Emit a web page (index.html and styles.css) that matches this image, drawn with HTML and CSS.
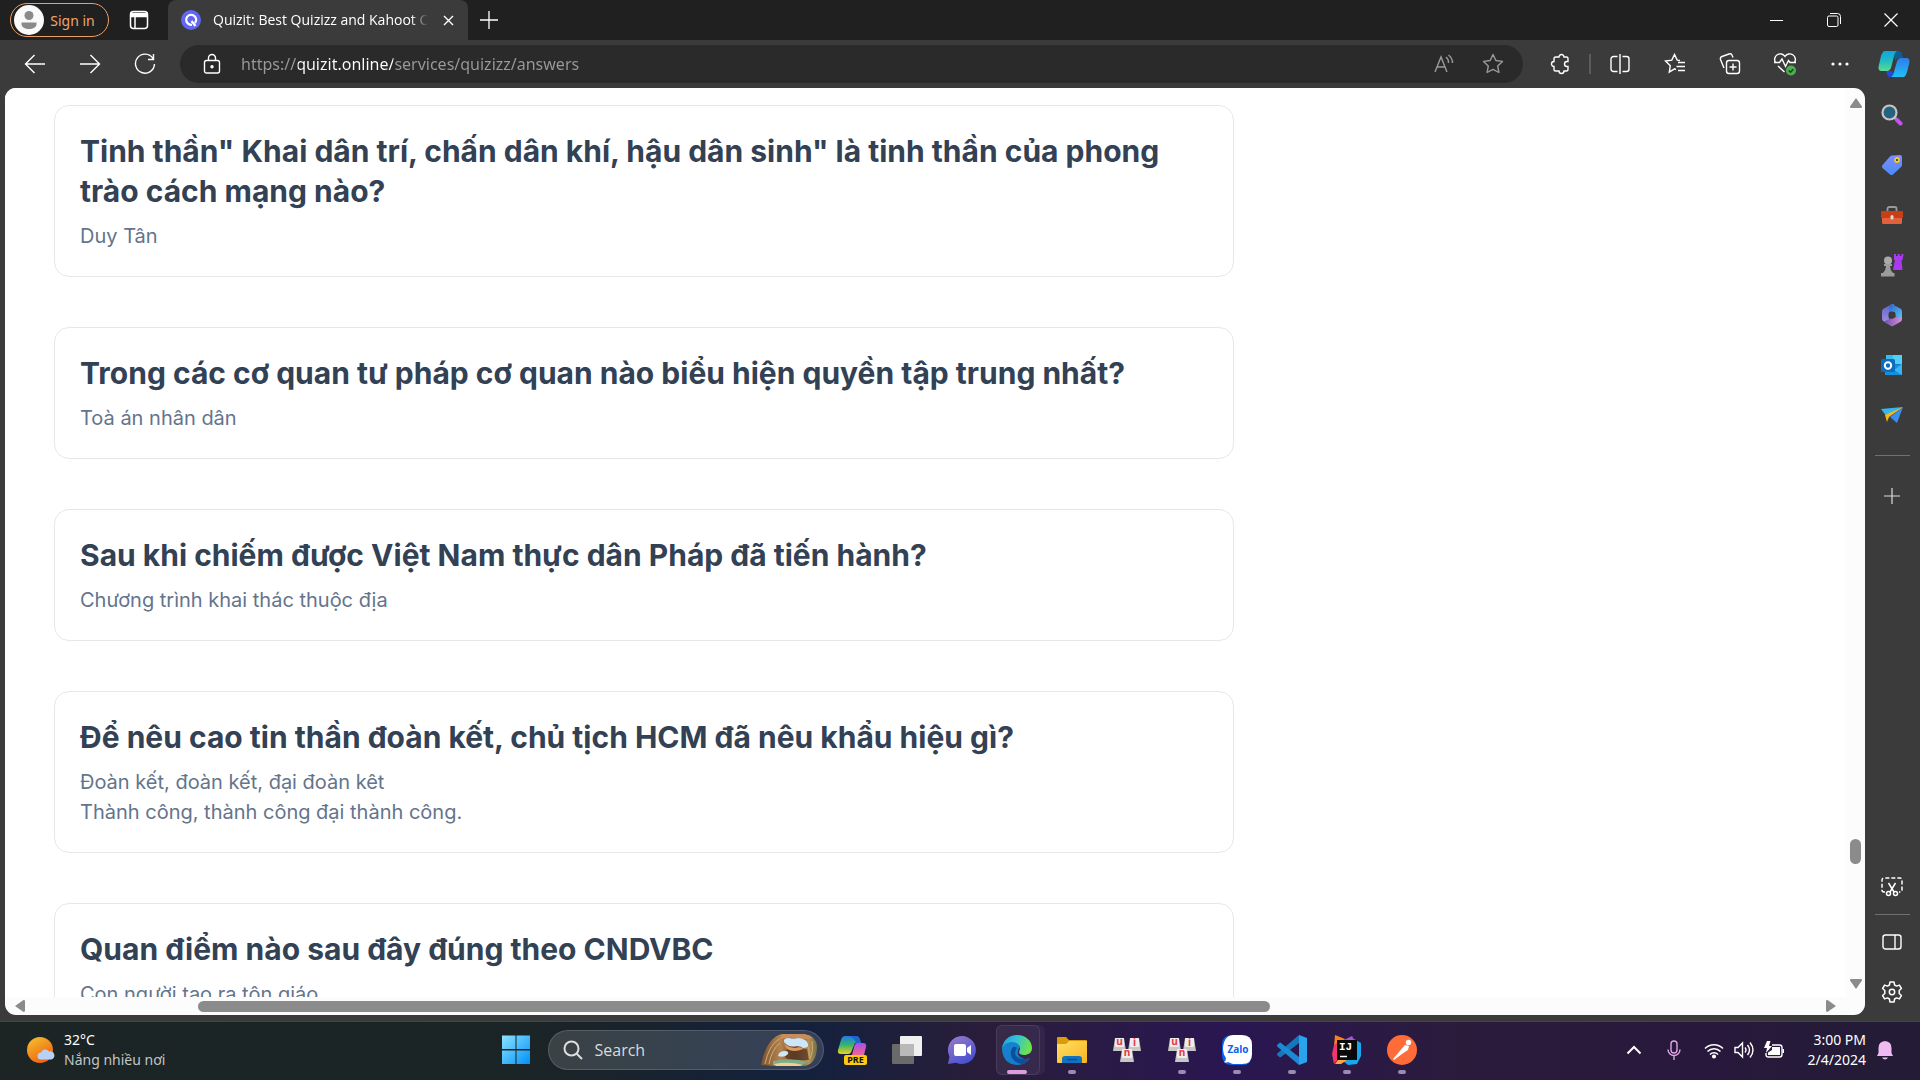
FILE: index.html
```html
<!DOCTYPE html>
<html lang="vi">
<head>
<meta charset="utf-8">
<meta name="viewport" content="width=device-width, initial-scale=1">
<title>Quizit: Best Quizizz and Kahoot</title>
<link rel="stylesheet" href="styles.css">
</head>
<body>
<div class="browser">
  <header class="tabstrip">
    <button class="profile" type="button">
      <svg width="30" height="30" viewBox="0 0 30 30" aria-hidden="true"><circle cx="15" cy="15" r="15" fill="#fafafa"/><circle cx="15" cy="10.500" r="4.500" fill="#8a8a8a"/><path d="M7.500 17.500h15v1.500c0 3.500-3.500 5-7.500 5s-7.500-1.500-7.500-5z" fill="#8a8a8a"/></svg>
      <span>Sign in</span>
    </button>
    <button class="workspace" type="button" aria-label="Tab actions">
      <svg width="20" height="20" viewBox="0 0 20 20" fill="none" stroke="#fff" stroke-width="1.500"><rect x="1.500" y="1.500" width="17" height="17" rx="3"/><path d="M2 3.500h16v3H2z" fill="#fff"/><path d="M6 7v11"/></svg>
    </button>
    <div class="tab">
      <svg width="20" height="20" viewBox="0 0 20 20" aria-hidden="true"><circle cx="10" cy="10" r="10" fill="#6366f1"/><path d="M11 14.700A5 5 0 1 1 14 13M10.500 11l4 5" fill="none" stroke="#fff" stroke-width="2.200"/></svg>
      <span class="tab-title">Quizit: Best Quizizz and Kahoot C</span>
      <button class="tab-close" type="button" aria-label="Close tab"><svg width="11" height="11" viewBox="0 0 11 11" stroke="#fff" stroke-width="1.400"><path d="M1 1l9 9M10 1l-9 9"/></svg></button>
    </div>
    <button class="new-tab" type="button" aria-label="New tab"><svg width="18" height="18" viewBox="0 0 18 18" stroke="#fff" stroke-width="1.300"><path d="M9 0v18M0 9h18"/></svg></button>
    <div class="window-controls">
      <button type="button" aria-label="Minimize"><svg width="13" height="13" viewBox="0 0 13 13" stroke="#fff"><path d="M0 6.500h13"/></svg></button>
      <button type="button" aria-label="Restore"><svg width="14" height="14" viewBox="0 0 14 14" fill="none" stroke="#fff"><rect x=".5" y="3" width="10.500" height="10.500" rx="1.500"/><path d="M3 .5h7.500a3 3 0 0 1 3 3V11"/></svg></button>
      <button type="button" aria-label="Close"><svg width="14" height="14" viewBox="0 0 14 14" stroke="#fff" stroke-width="1.200"><path d="M.5.5l13 13M13.500.5l-13 13"/></svg></button>
    </div>
  </header>

  <nav class="toolbar" aria-label="Browser toolbar">
    <div class="nav-buttons">
      <button type="button" aria-label="Back"><svg width="22" height="20" viewBox="0 0 22 20"><path d="M21 10H1.500M10.500 1L1.500 10l9 9"/></svg></button>
      <button type="button" aria-label="Forward"><svg width="22" height="20" viewBox="0 0 22 20"><path d="M1 10h19.500M11.500 1l9 9-9 9"/></svg></button>
      <button type="button" aria-label="Refresh"><svg width="22" height="22" viewBox="0 0 22 22"><path d="M19 5.500A9.500 9.500 0 1 0 20.500 11M19.500 1v5.500H14"/></svg></button>
    </div>
    <form class="address">
      <svg width="18" height="22" viewBox="0 0 18 22" fill="none" stroke="#fff" stroke-width="1.400" aria-hidden="true"><rect x="1.500" y="7.500" width="15" height="12.500" rx="2"/><path d="M5.500 7.500V5a3.500 3.500 0 0 1 7 0v2.500"/><circle cx="9" cy="13.700" r="1" fill="#fff"/></svg>
      <input type="text" aria-label="Address" value="https://quizit.online/services/quizizz/answers">
      <button type="button" aria-label="Read aloud"><svg width="20" height="20" viewBox="0 0 20 20"><path d="M1 18L7 3l6 15M3 13h8M12 3a7 7 0 0 1 2.500 6M14.500 1A10 10 0 0 1 18.500 9"/></svg></button>
      <button type="button" aria-label="Add to favorites"><svg width="22" height="22" viewBox="0 0 22 22" stroke-linejoin="round"><path d="M11 1.500l2.900 6 6.600.9-4.800 4.600 1.200 6.500-5.900-3.100-5.900 3.100 1.200-6.500L1.500 8.400l6.600-.9z"/></svg></button>
    </form>
    <div class="tools">
      <button type="button" aria-label="Extensions"><svg width="22" height="22" viewBox="0 0 22 22"><path d="M4 5.500a1.500 1.500 0 0 1 1.500-1.500H9a2.500 2.500 0 1 1 5 0h2.500A1.500 1.500 0 0 1 18 5.500V8.500h-1a2.500 2.500 0 0 0 0 5h1v3a1.500 1.500 0 0 1-1.500 1.500H14a2.500 2.500 0 0 1-5 0H5.500A1.500 1.500 0 0 1 4 16.500v-3a2.500 2.500 0 1 1 0-5z"/></svg></button>
      <span class="divider"></span>
      <button type="button" aria-label="Split screen"><svg width="20" height="20" viewBox="0 0 20 20"><path d="M7.500 2.500h-4a2.500 2.500 0 0 0-2.500 2.500v10a2.500 2.500 0 0 0 2.500 2.500h4M12.500 2.500h4A2.500 2.500 0 0 1 19 5v10a2.500 2.500 0 0 1-2.500 2.500h-4M10 0v20"/></svg></button>
      <button type="button" aria-label="Favorites"><svg width="22" height="22" viewBox="0 0 22 22"><path d="M12 16.500l-1.500-.7L5.300 19l1-6.300L1.500 8l6.300-.9L10.500 1.500l2.700 5.600 2.800.4M14 9.500h7M12.500 13.500H21M14 17.500h7"/></svg></button>
      <button type="button" aria-label="Collections"><svg width="22" height="22" viewBox="0 0 22 22"><rect x="7.500" y="7.500" width="13" height="13" rx="2.500"/><path d="M14 10.500v7M10.500 14h7M5 15L1.500 6.500a2.500 2.500 0 0 1 1.500-3l7-2.500a2.500 2.500 0 0 1 3.200 1.500l.8 2"/></svg></button>
      <button type="button" aria-label="Browser essentials"><svg width="24" height="24" viewBox="0 0 24 24"><path d="M2.500 10.500a5.300 5.300 0 0 1 9.500-6 5.300 5.300 0 0 1 9.500 6M1 10.500h5.500l2.500-3.500 3.500 7.500 3-6 1.500 2h6M5 14l6.500 6"/><circle cx="18" cy="18.500" r="5" fill="#4caf50" stroke="none"/><path d="M15.800 18.500l1.700 1.700 2.800-3" stroke="#1e3b1f"/></svg></button>
      <button type="button" aria-label="Settings and more"><svg width="18" height="6" viewBox="0 0 18 6"><g fill="#fff" stroke="none"><circle cx="2" cy="3" r="1.600"/><circle cx="9" cy="3" r="1.600"/><circle cx="16" cy="3" r="1.600"/></g></svg></button>
    </div>
    <button class="copilot" type="button" aria-label="Copilot">
      <svg width="32" height="28" viewBox="0 0 32 28"><defs><linearGradient id="c1" x2="0" y2="1"><stop offset="0" stop-color="#12a5de"/><stop offset=".5" stop-color="#22bcc4"/><stop offset="1" stop-color="#5ddc8c"/></linearGradient><linearGradient id="c2" x2="0" y2="1"><stop offset="0" stop-color="#2f7be8"/><stop offset="1" stop-color="#20c0f5"/></linearGradient></defs><path d="M14 1h6c2.500 0 3.500 1.500 4.200 4l.8 3h-4c-2 0-2.500.8-3.500 3z" fill="#0a6090"/><path d="M18 27h-6c-2.500 0-3-2-4-6h6z" fill="#2448d8"/><path d="M7 1h12c-2 1-2.500 3-3.500 7l-2 8c-1 4-2.500 5-5 5H4c-3 0-4-2-3.300-5L3 6c1-3 2-5 4-5z" fill="url(#c1)"/><path d="M25 27H13c2-1 2.500-3 3.500-7l2-7c1-4 2.500-5 5-5H28c3 0 4 2 3.300 5L29 22c-1 3-2 5-4 5z" fill="url(#c2)"/></svg>
    </button>
  </nav>

  <div class="workarea">
    <div class="page">
      <main class="viewport">
        <div class="answers">
          <article class="card">
            <h2>Tinh thần" Khai dân trí, chấn dân khí, hậu dân sinh" là tinh thần của phong trào cách mạng nào?</h2>
            <p>Duy Tân</p>
          </article>
          <article class="card">
            <h2>Trong các cơ quan tư pháp cơ quan nào biểu hiện quyền tập trung nhất?</h2>
            <p>Toà án nhân dân</p>
          </article>
          <article class="card">
            <h2>Sau khi chiếm được Việt Nam thực dân Pháp đã tiến hành?</h2>
            <p>Chương trình khai thác thuộc địa</p>
          </article>
          <article class="card">
            <h2>Để nêu cao tin thần đoàn kết, chủ tịch HCM đã nêu khẩu hiệu gì?</h2>
            <p>Đoàn kết, đoàn kết, đại đoàn kêt<br>Thành công, thành công đại thành công.</p>
          </article>
          <article class="card">
            <h2>Quan điểm nào sau đây đúng theo CNDVBC</h2>
            <p>Con người tạo ra tôn giáo</p>
          </article>
        </div>
      </main>
      <div class="scroll-y" aria-hidden="true">
        <svg width="12" height="10" viewBox="0 0 12 10"><path d="M6 0l6 8.500c0 1-.5 1.500-1.200 1.500H1.200C.5 10 0 9.500 0 8.500z"/></svg>
        <div class="track"><span class="thumb"></span></div>
        <svg width="12" height="10" viewBox="0 0 12 10"><path d="M6 10l6-8.500C12 .5 11.500 0 10.800 0H1.200C.5 0 0 .5 0 1.500z"/></svg>
      </div>
      <div class="scroll-x" aria-hidden="true">
        <svg width="10" height="12" viewBox="0 0 10 12"><path d="M0 6l8.500-6C9.500 0 10 .5 10 1.200v9.600c0 .7-.5 1.200-1.500 1.200z"/></svg>
        <div class="track"><span class="thumb"></span></div>
        <svg width="10" height="12" viewBox="0 0 10 12"><path d="M10 6L1.500 0C.5 0 0 .5 0 1.200v9.600c0 .7.5 1.200 1.500 1.200z"/></svg>
      </div>
    </div>

    <aside class="sidebar" aria-label="Edge sidebar">
      <button type="button" aria-label="Search"><svg width="22" height="22" viewBox="0 0 22 22"><path d="M13 13l3 3" stroke="#aaa" stroke-width="3"/><path d="M16 16l3.500 3.500" stroke="#c84df2" stroke-width="4" stroke-linecap="round"/><circle cx="8.500" cy="8.500" r="7" fill="#24627f" stroke="#c4c4c4" stroke-width="2.200"/></svg></button>
      <button type="button" aria-label="Shopping"><svg width="22" height="22" viewBox="0 0 22 22"><defs><linearGradient id="tg" x2="0" y2="1"><stop stop-color="#7d8cff"/><stop offset="1" stop-color="#4b8bf5"/></linearGradient></defs><path d="M11 1.500L19 1q2 0 2 2v8q0 1-1 2l-8 7.500q-1.500 1-3 0L1.500 14q-1.500-1.500 0-3L9 2.500q1-1 2-1z" fill="url(#tg)"/><circle cx="16" cy="6" r="2" fill="#26337a" stroke="#f2cd1c" stroke-width="1.800"/></svg></button>
      <button type="button" aria-label="Tools"><svg width="24" height="20" viewBox="0 0 24 20"><path d="M7.500 6V3.500q0-1.500 2-1.500h5q2 0 2 1.500V6" fill="none" stroke="#9a9a9a" stroke-width="1.800"/><rect x="2" y="9" width="20" height="10" rx="1.500" fill="#e2603a"/><rect x="1" y="6" width="22" height="7" rx="1" fill="#c93e14"/><rect x="10.500" y="10" width="3" height="4.500" rx="1.500" fill="#ddd"/></svg></button>
      <button type="button" aria-label="Games"><svg width="24" height="24" viewBox="0 0 24 24"><path d="M14 1h2v2h1.700V1h2v2h1.700V1H23.500l-1 6h-1l1 10H13l2-10h-1z" fill="#a93af0"/><circle cx="8" cy="7.500" r="4" fill="#aaa"/><path d="M4 11h8v2h-2q0 4 3 7h1.500v3.500H1V20h2q3-3 3-7H4z" fill="#9c9c9c"/></svg></button>
      <button type="button" aria-label="Microsoft 365"><svg width="22" height="24" viewBox="0 0 22 24"><defs><linearGradient id="m1" x2="0" y2="1"><stop stop-color="#5a66c9"/><stop offset="1" stop-color="#ab8fe6"/></linearGradient><linearGradient id="m2" x2="1" y2="1"><stop stop-color="#2f62cf"/><stop offset="1" stop-color="#57c7f2"/></linearGradient><linearGradient id="m3" x2="1"><stop stop-color="#6c4fb0"/><stop offset="1" stop-color="#d68fd8"/></linearGradient></defs><path d="M11 1L2 6Q1 7 1 9v6q0 2 1 3l6 3.500V9l5-4V1z" fill="url(#m1)"/><path d="M11 1l9 5q1 1 1 3v7l-7-3V9L8 8.500V3z" fill="url(#m2)"/><path d="M3 18.500l11-5 7 1v1q0 2-1 3l-8 4.500q-1 .5-2 0z" fill="url(#m3)"/><path d="M11 8.500l3.500 1.700v4L11 16l-3.500-1.800v-4z" fill="#3b3b3b"/></svg></button>
      <button type="button" aria-label="Outlook"><svg width="22" height="22" viewBox="0 0 22 22"><path d="M5 1h16v8H5z" fill="#39b9ee"/><path d="M12 1h9v9h-9z" fill="#4fd0fa"/><path d="M4 11l17-1v11H4z" fill="#1490df"/><path d="M21 10v11l-8-5z" fill="#35b8f1"/><rect y="5" width="14" height="13" rx="1.500" fill="#0a6dc2"/><circle cx="7" cy="11.500" r="3.200" fill="none" stroke="#fff" stroke-width="2"/></svg></button>
      <button type="button" aria-label="Drop"><svg width="22" height="18" viewBox="0 0 22 18"><path d="M0 3L22 1 6 11z" fill="#36b6ed"/><path d="M22 1L9 11l7 6z" fill="#3b8df0"/><path d="M22 1L4 9l2 7 2-5z" fill="#f5b817"/></svg></button>
      <hr>
      <button type="button" aria-label="Customize"><svg width="16" height="16" viewBox="0 0 16 16" stroke="#ddd" stroke-width="1.200"><path d="M8 0v16M0 8h16"/></svg></button>
      <div class="sidebar-end">
        <button type="button" aria-label="Screenshot"><svg width="22" height="20" viewBox="0 0 22 20" fill="none" stroke="#fff" stroke-width="1.500"><path d="M4 15H3q-2 0-2-2V3q0-2 2-2h16q2 0 2 2v10q0 2-2 2h-1" stroke-dasharray="4 2"/><path d="M7.500 6l5.500 9M14.500 6L9 15"/><circle cx="7.500" cy="16.500" r="2"/><circle cx="14.500" cy="16.500" r="2"/></svg></button>
        <hr>
        <button type="button" aria-label="Hide sidebar"><svg width="20" height="18" viewBox="0 0 20 18" fill="none" stroke="#fff" stroke-width="1.400"><rect x="1" y="2" width="18" height="14" rx="2.500"/><path d="M13 2v14"/></svg></button>
        <button type="button" aria-label="Sidebar settings"><svg width="22" height="22" viewBox="0 0 22 22" fill="none" stroke="#fff" stroke-width="1.500" stroke-linejoin="round"><path d="M9 1h4l.6 3 1.900 1.100 2.900-1 2 3.400L18.200 9.500v3l2.200 2-2 3.400-2.900-1L13.600 18 13 21H9l-.6-3-1.900-1.100-2.900 1-2-3.400 2.200-2v-3l-2.200-2 2-3.400 2.900 1L8.400 4z"/><circle cx="11" cy="11" r="2.700"/></svg></button>
      </div>
    </aside>
  </div>
</div>

<footer class="taskbar">
  <button class="weather" type="button">
    <svg width="29" height="29" viewBox="0 0 29 29" aria-hidden="true"><defs><linearGradient id="sun" x2=".6" y2="1"><stop stop-color="#f4c531"/><stop offset="1" stop-color="#ef6210"/></linearGradient></defs><circle cx="13" cy="14" r="13" fill="url(#sun)"/><path d="M14 23.500a3.500 3.500 0 0 1 0-7 4.500 4.500 0 0 1 8-1 4 4 0 0 1 2.500 8z" fill="#b6d0f8"/></svg>
    <span class="weather-text"><span>32°C</span><span class="muted">Nắng nhiều nơi</span></span>
  </button>
  <div class="dock">
    <button type="button" aria-label="Start"><svg width="30" height="30" viewBox="0 0 30 30"><defs><linearGradient id="win" x2="1" y2="1"><stop stop-color="#8be4ff"/><stop offset="1" stop-color="#0090f8"/></linearGradient></defs><path d="M1 .5h13.500V14H1zM15.500.5H29V14H15.500zM1 15.500h13.500V29H1zM15.500 15.500H29V29H15.500z" fill="url(#win)"/></svg></button>
    <form class="search">
      <svg width="20" height="20" viewBox="0 0 20 20" fill="none" stroke="#ddd" stroke-width="2" aria-hidden="true"><circle cx="8.500" cy="8.500" r="7"/><path d="M13.500 13.500L19 19"/></svg>
      <input type="text" aria-label="Search" placeholder="Search">
      <svg width="60" height="34" viewBox="0 0 60 34" aria-hidden="true"><defs><linearGradient id="arch" x2="1"><stop stop-color="#7a5331"/><stop offset=".35" stop-color="#b5834f"/><stop offset=".6" stop-color="#6e4a30"/><stop offset=".85" stop-color="#b58d58"/><stop offset="1" stop-color="#6f7248"/></linearGradient></defs><path d="M1 32Q7 4 22 1h22q12 2 13 12 0 17-12 20H14z" fill="url(#arch)"/><path d="M22 1h22q6 1 9 4-10 2-20 0-8-1-14 2z" fill="#c98d5a"/><path d="M5 31Q9 12 19 6M9 31Q12 16 20 10M52 8q2 10-2 18M47 12q4 6 1 16" stroke="#d4ad72" fill="none"/><path d="M27 15q11 2 20 1l2 11H29l-4-3z" fill="#553621" opacity=".75"/><path d="M24 9q-1-4 5-4 5 1 9 0 9 1 10 6 1 4-5 4-2-2-6-2-8 2-13-4z" fill="#cde6fa"/><path d="M24 11q5 4 12 4 4-2 7 1-9 4-16 0z" fill="#dd9b63"/><path d="M18 23q1-5 7-5 4 0 3 3-3 4-10 2z" fill="#cde6fa"/><path d="M13 28q18-4 35 1l-6 3H13z" fill="#7fae86"/><path d="M14 31q15-3 29 1l-3 1H16z" fill="#f1cf91"/></svg>
    </form>
    <button type="button" aria-label="Copilot preview"><svg width="30" height="30" viewBox="0 0 30 30"><defs><linearGradient id="p1" x2="0" y2="1"><stop stop-color="#2479e6"/><stop offset=".5" stop-color="#35b46c"/><stop offset="1" stop-color="#f4cf1d"/></linearGradient><linearGradient id="p2" x2="0" y2="1"><stop stop-color="#a64cf0"/><stop offset="1" stop-color="#f2668d"/></linearGradient></defs><path d="M8 1h11q3 0 4 4l1 3h-6l-3 7q-1 4-4 4H4q-4 0-3-4L4 5q1-4 4-4z" fill="url(#p1)"/><path d="M12 1h7q3 0 4 4l1 3h-5q-2-6-7-7z" fill="#1b63d6"/><path d="M20 8h6q4 0 3 4l-2 8H15l2-8q1-4 3-4z" fill="url(#p2)"/><rect x="7" y="20" width="23" height="10" rx="2" fill="#ffc90e"/><text x="18.500" y="28" text-anchor="middle" class="badge">PRE</text></svg></button>
    <button type="button" aria-label="Task view"><svg width="30" height="28" viewBox="0 0 30 28"><rect y="8" width="22" height="20" rx="1" fill="#6a6a6a"/><rect x="8" width="22" height="20" rx="1" fill="#f0f0f0"/><path d="M8 8h14v12H8z" fill="#b9b9b9"/></svg></button>
    <button type="button" aria-label="Chat"><svg width="30" height="30" viewBox="0 0 30 30"><defs><linearGradient id="chat" x2=".6" y2="1"><stop stop-color="#9a7ecb"/><stop offset="1" stop-color="#4a50d0"/></linearGradient></defs><path d="M15 1a14 14 0 1 1-6 26.700L1 29l1.500-7.500A14 14 0 0 1 15 1z" fill="url(#chat)"/><rect x="7" y="9" width="12" height="12" rx="2" fill="#fff"/><path d="M20 13l4-3v10l-4-3z" fill="#fff"/></svg></button>
    <button class="running active" type="button" aria-label="Microsoft Edge"><svg width="30" height="30" viewBox="0 0 30 30"><defs><linearGradient id="e1" x2="1" y2=".3"><stop stop-color="#1b9de2"/><stop offset=".5" stop-color="#35c1d8"/><stop offset="1" stop-color="#6be24e"/></linearGradient><linearGradient id="e2" x2="1" y2="1"><stop stop-color="#1685d1"/><stop offset="1" stop-color="#1478c8"/></linearGradient></defs><path d="M0 14q0-7 8-8 9 0 10 6-4 4-1 9 4 5 11 2-4 7-13 7Q1 29 0 14z" fill="url(#e2)"/><path d="M11 12q-4 5-1 11 4 6 11 6 4-2 7-6-8 3-13-1-4-4 0-9-2-2-4-1z" fill="#0b4f9e"/><path d="M0 14C1 5 7 0 15 0c9 0 15 6 15 13 0 5-4 7-8 7-3 0-5-1-5-3 0-1 1-2 1-4 0-3-3-6-8-6C5 7 1 10 0 14z" fill="url(#e1)"/></svg></button>
    <button class="running" type="button" aria-label="File Explorer"><svg width="30" height="28" viewBox="0 0 30 28"><defs><linearGradient id="fold" x2="1" y2="1"><stop stop-color="#ffe06a"/><stop offset="1" stop-color="#f7b519"/></linearGradient></defs><path d="M0 2q0-1 1-1h8l3 3h17q1 0 1 1v9H0z" fill="#dc9c09"/><path d="M0 8h9l3-3h18v21q0 1-1 1H1q-1 0-1-1z" fill="url(#fold)"/><path d="M5 27v-4q0-3 3-3h14q3 0 3 3v4z" fill="#1272bf"/><path d="M10 23.500h10" stroke="#07528f" stroke-width="1.500"/></svg></button>
    <button type="button" aria-label="UniKey"><svg width="28" height="24" viewBox="0 0 28 24"><g fill="#c9c6c6"><path d="M2 0h9l2 13H0zM17 0h9l2 13H15zM9 11h10l2 13H7z"/></g><g fill="#efecec"><rect x="2" width="9" height="9" rx="1"/><rect x="17" width="9" height="9" rx="1"/><rect x="9" y="11" width="10" height="9" rx="1"/></g><g class="keycap" text-anchor="middle"><text x="6.500" y="7">u</text><text x="21.500" y="8">i</text><text x="14" y="18">n</text></g></svg></button>
    <button class="running" type="button" aria-label="UniKey settings"><svg width="28" height="24" viewBox="0 0 28 24"><g fill="#c9c6c6"><path d="M2 0h9l2 13H0zM17 0h9l2 13H15zM9 11h10l2 13H7z"/></g><g fill="#efecec"><rect x="2" width="9" height="9" rx="1"/><rect x="17" width="9" height="9" rx="1"/><rect x="9" y="11" width="10" height="9" rx="1"/></g><g class="keycap" text-anchor="middle"><text x="6.500" y="7">u</text><text x="21.500" y="8">i</text><text x="14" y="18">n</text></g></svg></button>
    <button class="running" type="button" aria-label="Zalo"><svg width="30" height="30" viewBox="0 0 30 30"><path d="M10 0h10q10 0 10 10v10q0 10-10 10H10Q0 30 0 20V10Q0 0 10 0z" fill="#0b62ee"/><path d="M12 0h8q10 0 10 10v9q0 10-10 10H11q-3-1-5-2-2 1-4 0 2-1 2-4-3-4-3-10Q2 0 12 0z" fill="#fff"/><text x="16" y="18" text-anchor="middle" class="zalo">Zalo</text></svg></button>
    <button class="running" type="button" aria-label="Visual Studio Code"><svg width="30" height="30" viewBox="0 0 30 30"><path d="M22 0l8 3v24l-8 3z" fill="#2aa3ef"/><path d="M22 0v8L4 22l-1 .5-3-2.500.2-1.500z" fill="#1478bd"/><path d="M22 30v-8L4 8l-1-.5L0 10l.2 1.500z" fill="#1b8ad2"/></svg></button>
    <button class="running" type="button" aria-label="IntelliJ IDEA"><svg width="30" height="30" viewBox="0 0 30 30"><path d="M3 0l10 4-6 8-5-1z" fill="#fc801d"/><path d="M2 10l6-4v16l-6 7-2-10z" fill="#f3356f"/><path d="M12 5l8-4 4 7-9 2z" fill="#a857d6"/><path d="M22 4l7 4v13l-4 8-9 1-5-4z" fill="#16a8ed"/><path d="M3 29l5-7 7 3-6 4z" fill="#ffa33b"/><rect x="5" y="5" width="20" height="20" fill="#090909"/><text x="7" y="15" class="ij">IJ</text><path d="M8 21.500h7" stroke="#fff" stroke-width="1.500"/></svg></button>
    <button class="running" type="button" aria-label="Postman"><svg width="30" height="30" viewBox="0 0 30 30"><circle cx="15" cy="15" r="15" fill="#ff6c37"/><circle cx="21.500" cy="7.500" r="2.700" fill="#fff"/><path d="M18 10l4 1-1 4-6 4-8 6-1-1 6-7z" fill="#fff"/></svg></button>
  </div>
  <div class="tray">
    <button type="button" aria-label="Show hidden icons"><svg width="16" height="10" viewBox="0 0 16 10" fill="none" stroke="#fff" stroke-width="2"><path d="M1.500 8.500L8 2l6.500 6.500"/></svg></button>
    <button type="button" aria-label="Microphone"><svg width="14" height="20" viewBox="0 0 14 20" fill="none" stroke="#dfa5e6" stroke-width="1.400"><rect x="4" y="1" width="6" height="12" rx="3"/><path d="M1 9.500a6 6 0 0 0 12 0M7 15.500V20"/></svg></button>
    <button class="system" type="button" aria-label="Network, sound and battery">
      <svg width="20" height="17" viewBox="0 0 20 17" fill="none" stroke="#fff" stroke-width="1.500"><path d="M1 6.500a12.500 12.500 0 0 1 18 0M3.500 9.500a9 9 0 0 1 13 0M6 12.500a5.500 5.500 0 0 1 8 0"/><circle cx="10" cy="14.500" r="1.300" fill="#fff"/></svg>
      <svg width="20" height="18" viewBox="0 0 20 18" fill="none" stroke="#fff" stroke-width="1.400"><path d="M1 6.500h3L8.500 2v14L4 11.500H1zM11 6.500q2 2.500 0 5M13.500 4q4 5 0 10M16 1.500q6 7.500 0 15"/></svg>
      <svg width="20" height="18" viewBox="0 0 20 18"><path d="M8 4h7.500Q18 4 18 6.500v7q0 2.500-2.500 2.500h-11Q2 16 2 13.500V12" fill="none" stroke="#fff" stroke-width="1.400"/><path d="M8 6h8v8H4v-2.500L8 9zM18.500 8h1.500v4h-1.500zM3 0l-3 7h3l-1 5 6-7H5l1.500-5z" fill="#fff"/></svg>
    </button>
    <button class="clock" type="button"><span>3:00 PM</span><span>2/4/2024</span></button>
    <button class="bell" type="button" aria-label="Notifications"><svg width="18" height="20" viewBox="0 0 18 20" fill="#efb9f2"><path d="M9 1q6.500.5 6.500 7v5l1.500 3H1l1.500-3V8Q2.500 1.500 9 1zM6 17.500h6q-1 2-3 2t-3-2z"/></svg></button>
  </div>
</footer>
</body>
</html>
```
FILE: styles.css
```css
* { box-sizing: border-box; }

body {
  margin: 0;
  height: 100vh;
  display: flex;
  flex-direction: column;
  overflow: hidden;
  background: #3b3b3b;
  color: #fff;
  font-family: "Noto Sans", "Open Sans", sans-serif;
  font-size: 14px;
}

button, input {
  margin: 0;
  padding: 0;
  border: 0;
  background: none;
  color: inherit;
  font: inherit;
}

button {
  display: flex;
  align-items: center;
  justify-content: center;
}

svg { display: block; flex: none; }

.browser {
  flex: 1;
  min-height: 0;
  display: flex;
  flex-direction: column;
}

/* Tab strip */
.tabstrip {
  display: flex;
  align-items: center;
  height: 40px;
  padding-left: 10px;
  background: #202020;
}

.profile {
  gap: 6px;
  width: 99px;
  height: 34px;
  padding-right: 10px;
  border: 1px solid #eb9d63;
  border-radius: 17px;
  color: #f0a36b;
}

.workspace { width: 59px; height: 40px; }

.tab {
  display: flex;
  align-items: center;
  gap: 12px;
  width: 300px;
  height: 40px;
  padding: 0 12px 0 13px;
  border-radius: 8px 8px 0 0;
  background: #3b3b3b;
  font-family: "Open Sans", sans-serif;
}

.tab-title {
  flex: 1;
  overflow: hidden;
  line-height: 20px;
  white-space: nowrap;
  mask-image: linear-gradient(to right, #000 92%, transparent);
}

.tab-close { width: 16px; height: 16px; }
.new-tab { width: 42px; height: 40px; }

.window-controls { display: flex; margin-left: auto; padding-right: 1px; }
.window-controls button { width: 57px; height: 39px; }

/* Toolbar */
.toolbar {
  display: flex;
  align-items: center;
  height: 48px;
}

.toolbar button svg { fill: none; stroke: #fff; stroke-width: 1.4; }
.nav-buttons { display: flex; padding: 0 8px 0 7px; }
.nav-buttons button, .tools button { width: 55px; height: 36px; }

.address {
  flex: 1;
  display: flex;
  align-items: center;
  height: 38px;
  padding: 0 6px 0 23px;
  border-radius: 19px;
  background: #2a2a2a;
}

.address input {
  flex: 1;
  min-width: 0;
  height: 30px;
  margin-left: 20px;
  font-size: 16px;
  outline: 0;
  color: transparent;
  background: linear-gradient(to right, #9a9a9a 57px, #fff 57px 152px, #9a9a9a 152px);
  background-clip: text;
}

.address button { width: 49px; height: 36px; }
.toolbar .address button svg { stroke: #9a9a9a; }

.tools { display: flex; align-items: center; padding-left: 10px; }
.divider { width: 2px; height: 20px; margin: 0 1px; background: #5c5c5c; }
.copilot { width: 53px; height: 48px; }
.toolbar .copilot svg { stroke: none; }

/* Page and its scrollbars */
.workarea {
  flex: 1;
  min-height: 0;
  display: flex;
  padding-left: 5px;
}

.page {
  flex: 1;
  min-width: 0;
  display: grid;
  grid-template-columns: minmax(0, 1fr) 19px;
  grid-template-rows: minmax(0, 1fr) 18px;
  margin-bottom: 6px;
  overflow: hidden;
  border-radius: 11px;
  background: #fcfcfc;
}

.viewport {
  overflow: hidden;
  padding: 17px 49px 0;
  background: #fff;
  font-family: Inter, sans-serif;
}

.answers {
  display: flex;
  flex-direction: column;
  gap: 50px;
  max-width: 1180px;
}

.card {
  padding: 25px;
  border: 1px solid #e5e7eb;
  border-radius: 15px;
}

.card h2 {
  margin: 0 0 10px;
  color: #334155;
  font-size: 30px;
  font-weight: 700;
  line-height: 40px;
}

.card p {
  margin: 0;
  color: #64748b;
  font-size: 20px;
  line-height: 30px;
}

.scroll-y, .scroll-x { display: flex; align-items: center; fill: #8b8b8b; }
.scroll-y { flex-direction: column; padding: 10px 0 8px; }
.scroll-x { padding: 0 10px; }
.track { flex: 1; display: flex; }
.scroll-y .track { flex-direction: column; }
.track::before, .track::after { content: ""; }
.thumb { border-radius: 6px; background: #8b8b8b; }
.scroll-y .thumb { width: 11px; flex: 25; }
.scroll-y .track::before { flex: 731; }
.scroll-y .track::after { flex: 115; }
.scroll-x .thumb { height: 11px; flex: 1072; }
.scroll-x .track::before { flex: 173; }
.scroll-x .track::after { flex: 556; }

/* Sidebar */
.sidebar {
  display: flex;
  flex-direction: column;
  align-items: center;
  width: 55px;
  padding: 2px 1px 4px 0;
}

.sidebar button { width: 50px; height: 50px; }

.sidebar hr {
  width: 35px;
  height: 1px;
  margin: 15px 0;
  border: 0;
  background: #707070;
}

.sidebar-end { margin-top: auto; }
.sidebar-end hr { margin: 2px auto; }

/* Taskbar */
.taskbar {
  display: grid;
  grid-template-columns: 1fr auto 1fr;
  align-items: center;
  height: 59px;
  padding-bottom: 2px;
  border-top: 1px solid #44444a;
  background: linear-gradient(to right, #1c2424 0, #1b2426 28%, #13213d 42%, #291d3a 51%, #2a1652 64%, #2b1b3b 76%, #28183c 88%, #231c36 100%);
}

.weather {
  justify-self: start;
  gap: 8px;
  padding-left: 27px;
}

.weather-text, .clock { display: flex; flex-direction: column; line-height: 20px; }
.weather-text { align-items: flex-start; }
.muted { color: #c2c6c6; }

.dock { display: flex; align-items: center; padding-right: 2px; }
.dock > button {
  position: relative;
  width: 55px;
  height: 50px;
}

.search {
  display: flex;
  align-items: center;
  width: 276px;
  height: 40px;
  margin: 0 1px 0 4px;
  padding: 0 3px 0 14px;
  border: 1px solid #ffffff26;
  border-radius: 20px;
  background: #ffffff24;
}

.search input {
  flex: 1;
  min-width: 0;
  margin-left: 12px;
  font-family: "Open Sans", sans-serif;
  font-size: 16px;
  outline: 0;
}

.search input::placeholder { color: #d8dadd; opacity: 1; }

.active::before {
  content: "";
  position: absolute;
  inset: 0 5px 0 6px;
  border: 1px solid #ffffff18;
  border-radius: 6px;
  background: #ffffff10;
  box-shadow: 5px 0 0 #ffffff0c;
}

.active svg { position: relative; }

.running::after {
  content: "";
  position: absolute;
  bottom: 1px;
  left: 50%;
  width: 8px;
  height: 4px;
  margin-left: -4px;
  border-radius: 2px;
  background: #9a8cae;
}

.running.active::after { width: 20px; margin-left: -10px; background: #dc9be2; }

.badge { font: 700 9px "Noto Sans", sans-serif; fill: #111; }
.keycap { font: 700 10px "Open Sans", sans-serif; fill: #e5383f; }
.zalo { font: 700 10px "Open Sans", sans-serif; fill: #0b62ee; }
.ij { font: 700 11px "Liberation Mono", monospace; fill: #fff; }

.tray { justify-self: end; display: flex; align-items: center; }
.tray button { width: 40px; height: 48px; }
.tray .system { gap: 10px; width: 100px; }
.tray .clock { align-items: flex-end; width: 72px; }
.tray .bell { width: 38px; margin-right: 16px; }
```
